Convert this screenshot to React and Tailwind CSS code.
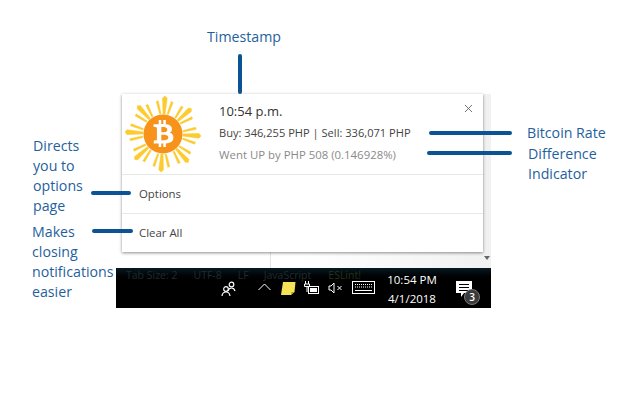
import { FaBtc } from 'react-icons/fa';
import { X } from 'lucide-react';

const labelCls = "absolute z-20 text-[#1f5f9e] text-[14.2px] leading-[20px] font-['Open_Sans',sans-serif]";
const lineCls = "absolute z-20 rounded-full bg-[#0b5394]";

function Sun() {
  const groups = [0, 45, 90, 135, 180, 225, 270, 315];
  return (
    <svg width="78" height="78" viewBox="-39 -39 78 78">
      {groups.map((a) => (
        <g key={a} transform={`rotate(${a + 3})`} fill="#fccb30" stroke="#fccb30" strokeLinejoin="round">
          <path d="M20 -1L36 -2.300L38 0L36 2.300L20 1z" strokeWidth=".6" />
          <path d="M20 -4.500L32 -8.500L33 -6.500L20 -3z" strokeWidth=".5" />
          <path d="M20 4.500L32 8.500L33 6.500L20 3z" strokeWidth=".5" />
        </g>
      ))}
      <circle r="19.5" fill="#f7931a" />
    </svg>
  );
}

function People() {
  return (
    <svg width="16" height="16" viewBox="0 0 16 16" fill="none" stroke="#fff" strokeWidth="1.2">
      <circle cx="10.5" cy="3.5" r="2.3" />
      <path d="M7 10c.5-2 2-3 3.5-3s3 1 3.5 3" />
      <circle cx="5" cy="8" r="2.3" fill="#000" />
      <path d="M1 15c.3-2.500 2-4 4-4s3.700 1.500 4 4" />
    </svg>
  );
}

function Sticky() {
  return (
    <svg width="16" height="15" viewBox="0 0 16 15">
      <path d="M3 1h12.500l-1 10-3.500 3H1z" fill="#f5e256" />
      <path d="M11 14l.5-3 3 0z" fill="#a8962a" />
    </svg>
  );
}

function Battery() {
  return (
    <svg width="16" height="14" viewBox="0 0 16 14" fill="none" stroke="#fff">
      <path d="M1.500 0v3M4.500 0v3M.5 3h5v2.500H.5zM3 5.500V11" strokeWidth="1" />
      <rect x="4.500" y="5.500" width="10" height="7" fill="#000" />
      <rect x="6" y="7" width="7" height="4" fill="#fff" stroke="none" />
    </svg>
  );
}

function Speaker() {
  return (
    <svg width="16" height="12" viewBox="0 0 16 12" fill="none" stroke="#fff" strokeWidth="1">
      <path d="M1 4h2l3-3v10L3 8H1z" />
      <path d="M9.500 4l4 4M13.500 4l-4 4" />
    </svg>
  );
}

function Keyboard() {
  return (
    <svg width="23" height="13" viewBox="0 0 23 13" fill="none" stroke="#fff" strokeWidth="1">
      <rect x=".5" y=".5" width="22" height="12" />
      <path d="M3 3.500h17M3 6h17" strokeDasharray="1 1" />
      <path d="M3 9.500h17" />
    </svg>
  );
}

function Notes() {
  return (
    <div className="relative w-[24px] h-[22px]">
      <svg width="17" height="17" viewBox="0 0 17 17">
        <path d="M0 0h16v12H8l-3 4v-4H0z" fill="#fff" />
        <path d="M3 3.500h10M3 6.500h10M3 9.500h10" stroke="#000" strokeWidth="1" />
      </svg>
      <div className="absolute left-[8px] top-[8px] w-[16px] h-[16px] rounded-full bg-[#3a3a3a] border border-[#777] text-white text-[10px] leading-[14px] text-center font-semibold">3</div>
    </div>
  );
}

export default function App() {
  return (
    <div className="relative w-[640px] h-[400px] bg-white overflow-hidden font-['Open_Sans',sans-serif]">
      {/* screenshot block */}
      <div className="absolute left-[116px] top-[94px] w-[375px] h-[214px] flex flex-col">
        <div className="relative h-[174px] bg-gradient-to-r from-white via-white to-[#f1f1f1]">
          <div className="absolute left-[6px] top-0 w-[361px] h-[158px] bg-white shadow-[0_1px_3px_rgba(0,0,0,0.45)] flex flex-col z-10">
            <div className="relative h-[81px] flex border-b border-[#e8e8e8]">
              <div className="relative w-[78px] h-[78px] ml-[2px] mt-[1px] shrink-0">
                <Sun />
                <FaBtc className="absolute left-[26px] top-[25px] text-white text-[27px]" />
              </div>
              <div className="ml-[17px] pt-[9px] flex flex-col">
                <div className="text-[13px] leading-[17px] text-[#333]">10:54 p.m.</div>
                <div className="mt-[5px] text-[11.1px] leading-[15px] text-[#444] whitespace-nowrap">Buy: 346,255 PHP | Sell: 336,071 PHP</div>
                <div className="mt-[7px] text-[11.4px] leading-[15px] text-[#8a8a8a] whitespace-nowrap">Went UP by PHP 508 (0.146928%)</div>
              </div>
              <X className="absolute right-[8px] top-[8px] w-[13px] h-[13px] text-[#555]" strokeWidth={1.5} />
            </div>
            <div className="h-[39px] flex items-center pl-[17px] text-[11.4px] text-[#444] border-b border-[#e8e8e8]">Options</div>
            <div className="h-[38px] flex items-center pl-[17px] text-[11.4px] text-[#444]">Clear All</div>
          </div>
          <div className="absolute left-[154px] top-[158px] bottom-0 w-px bg-[#e4e4e4]" />
          <div className="absolute right-[1px] top-[162px] w-0 h-0 border-l-[3px] border-r-[3px] border-t-[4px] border-l-transparent border-r-transparent border-t-[#666]" />
        </div>
        <div className="flex-1 bg-black flex flex-col">
          <div className="h-[15px] bg-gradient-to-b from-[#0a1a22] to-black flex items-center pl-[10px] text-[10.5px] text-[#1e2b30] whitespace-nowrap">
            <span>Tab Size: 2</span>
            <span className="ml-[16px]">UTF-8</span>
            <span className="ml-[16px]">LF</span>
            <span className="ml-[15px]">JavaScript</span>
            <span className="ml-[17px] text-[#223318]">ESLint!</span>
          </div>
          <div className="flex-1 flex items-start pl-[105px] -mt-[2px]">
            <People />
            <svg className="ml-[21px] mt-[2px]" width="13" height="8" viewBox="0 0 13 8" fill="none" stroke="#fff" strokeWidth="1"><path d="M.5 7l6-6 6 6" /></svg>
            <div className="ml-[9px]"><Sticky /></div>
            <div className="ml-[8px]"><Battery /></div>
            <div className="ml-[8px] mt-[1px]"><Speaker /></div>
            <div className="ml-[8px]"><Keyboard /></div>
            <div className="ml-[10px] -mt-[11px] w-[54px] text-center text-white text-[11.5px] leading-[19px]">
              <div>10:54 PM</div>
              <div>4/1/2018</div>
            </div>
            <div className="ml-[17px]"><Notes /></div>
          </div>
        </div>
      </div>

      {/* annotation lines */}
      <div className={`${lineCls} left-[238px] top-[54px] w-[4px] h-[40px]`} />
      <div className={`${lineCls} left-[429px] top-[131px] w-[83px] h-[4px]`} />
      <div className={`${lineCls} left-[427px] top-[151px] w-[85px] h-[4px]`} />
      <div className={`${lineCls} left-[91px] top-[191px] w-[40px] h-[4px]`} />
      <div className={`${lineCls} left-[92px] top-[229px] w-[41px] h-[4px]`} />

      {/* annotation labels */}
      <div className={`${labelCls} left-[207px] top-[27px]`}>Timestamp</div>
      <div className={`${labelCls} left-[527px] top-[123px]`}>Bitcoin Rate</div>
      <div className={`${labelCls} left-[528px] top-[144px]`}>Difference<br />Indicator</div>
      <div className={`${labelCls} left-[33px] top-[136px]`}>Directs<br />you to<br />options<br />page</div>
      <div className={`${labelCls} left-[32px] top-[222px]`}>Makes<br />closing<br />notifications<br />easier</div>
    </div>
  );
}
